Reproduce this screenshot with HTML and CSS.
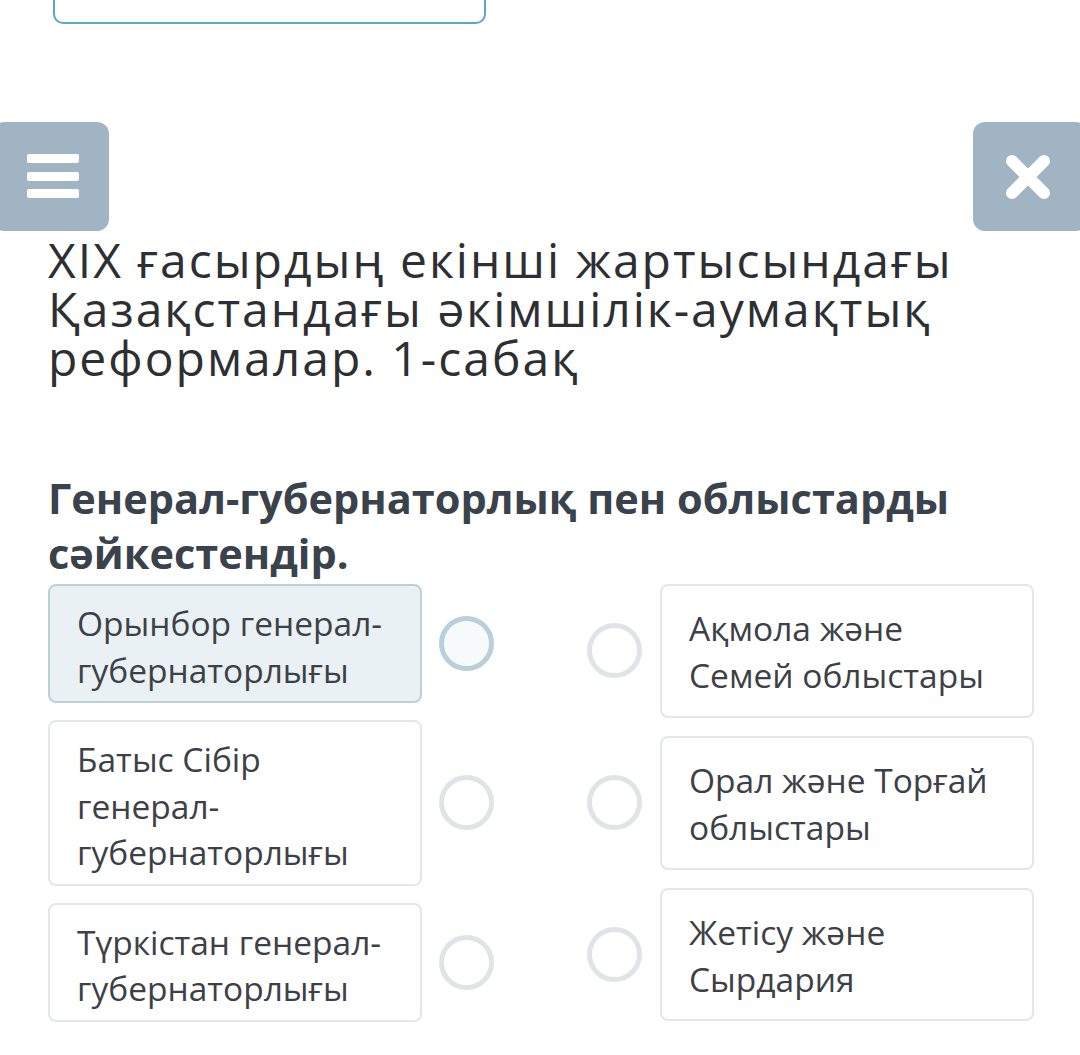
FILE: index.html
```html
<!DOCTYPE html>
<html lang="kk">
<head>
<meta charset="utf-8">
<link rel="stylesheet" href="styles.css">
</head>
<body>
<div class="page">
  <div class="top-box"></div>
  <div class="header">
    <div class="btn menu-btn">
      <svg width="52" height="45" viewBox="0 0 52 45"><rect x="0" y="0" width="52" height="9" rx="2" fill="#fff"/><rect x="0" y="18" width="52" height="9" rx="2" fill="#fff"/><rect x="0" y="35" width="52" height="9" rx="2" fill="#fff"/></svg>
    </div>
    <div class="btn close-btn">
      <svg width="44" height="44" viewBox="0 0 44 44"><path d="M6 6 L38 38 M38 6 L6 38" stroke="#fff" stroke-width="12" stroke-linecap="round"/></svg>
    </div>
  </div>
  <h1 class="title">XIX ғасырдың екінші жартысындағы Қазақстандағы әкімшілік-аумақтық реформалар. 1-сабақ</h1>
  <h2 class="question">Генерал-губернаторлық пен облыстарды сәйкестендір.</h2>
  <div class="match">
    <div class="col col-left">
      <div class="item">
        <div class="card card-active">Орынбор генерал-губернаторлығы</div>
        <div class="dot dot-active"></div>
      </div>
      <div class="item">
        <div class="card">Батыс Сібір генерал-губернаторлығы</div>
        <div class="dot"></div>
      </div>
      <div class="item">
        <div class="card">Түркістан генерал-губернаторлығы</div>
        <div class="dot"></div>
      </div>
    </div>
    <div class="col col-right">
      <div class="item item-grow">
        <div class="dot"></div>
        <div class="card card-right">Ақмола және Семей облыстары</div>
      </div>
      <div class="item item-grow">
        <div class="dot"></div>
        <div class="card card-right">Орал және Торғай облыстары</div>
      </div>
      <div class="item item-grow">
        <div class="dot"></div>
        <div class="card card-right">Жетісу және Сырдария</div>
      </div>
    </div>
  </div>
</div>
</body>
</html>
```

FILE: styles.css
```css
html, body {
  margin: 0;
  padding: 0;
  background: #fff;
  overflow: hidden;
}
body {
  font-family: "Open Sans", "Noto Sans", sans-serif;
  color: #3c4048;
}
.page {
  width: 1080px;
  height: 1055px;
  overflow: hidden;
}
.top-box {
  margin-left: 53px;
  width: 429px;
  height: 22px;
  border: 2px solid #5aa6d2;
  border-top: none;
  border-radius: 0 0 10px 10px;
}
.header {
  margin: 98px -8px 0 -8px;
  height: 109px;
  display: flex;
  justify-content: space-between;
}
.btn {
  width: 117px;
  height: 109px;
  background: #a0b4c3;
  border-radius: 12px;
  display: flex;
  align-items: center;
}
.menu-btn {
  justify-content: flex-start;
  padding-left: 35px;
  box-sizing: border-box;
}
.close-btn {
  width: 115px;
  justify-content: flex-start;
  padding-left: 33px;
  box-sizing: border-box;
}
.title {
  margin: 4px 0 0 48px;
  width: 1010px;
  font-weight: 400;
  font-size: 48px;
  letter-spacing: 2px;
  line-height: 49px;
  color: #2e2f33;
}
.question {
  margin: 89px 0 0 48px;
  width: 1010px;
  font-weight: 700;
  font-size: 41.5px;
  line-height: 55px;
  color: #3a424c;
}
.match {
  margin: 3px 0 0 48px;
  width: 986px;
  display: flex;
  justify-content: space-between;
}
.col {
  display: flex;
  flex-direction: column;
  gap: 17px;
}
.col-right {
  gap: 18px;
}
.item {
  display: flex;
  align-items: center;
  gap: 17px;
}
.item-grow {
  flex: 1;
  align-items: stretch;
  gap: 18px;
}
.item-grow .dot {
  align-self: center;
}
.card {
  width: 374px;
  box-sizing: border-box;
  padding: 14px 28px 8px 27px;
  border: 2px solid #e3e7ea;
  border-radius: 8px;
  background: #fff;
  font-size: 33.5px;
  line-height: 46.5px;
  color: #3d4147;
}
.card-right {
  display: flex;
  align-items: center;
  padding: 2px 28px 0 27px;
}
.card-active {
  background: #eaf1f5;
  border-color: #bcd0dc;
}
.dot {
  width: 55px;
  height: 55px;
  box-sizing: border-box;
  border: 5px solid #dfe4e8;
  border-radius: 50%;
  background: #fff;
  flex: none;
}
.dot-active {
  border-color: #b9d0dc;
  background: #f7fafb;
}
```
